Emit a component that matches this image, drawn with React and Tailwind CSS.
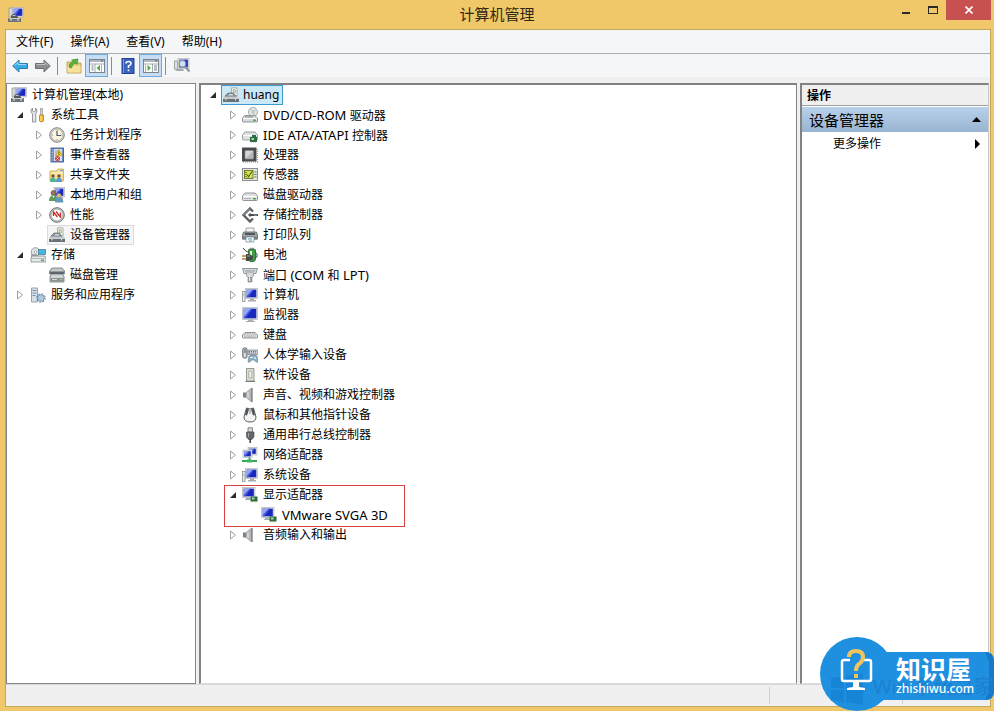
import React from "react";

const Svg = ({ children }) => (
  <svg width="16" height="16" viewBox="0 0 16 16" className="shrink-0" aria-hidden="true">
    {children}
  </svg>
);

// Screen with a lit diagonal, shared by all monitor icons
const Screen = ({ x, y, w, h }) => (
  <g>
    <rect x={x} y={y} width={w} height={h} fill="#dcdfe1" stroke="#a9aeb3" strokeWidth=".6" />
    <rect x={x + 1.2} y={y + 1.2} width={w - 2.4} height={h - 2.4} fill="#1a27bd" />
    <path d={`M${x + 1.2} ${y + 1.2}h${w / 2}L${x + 1.2} ${y + h - 2}z`} fill="#93a5f6" />
    <path d={`M${x + w / 2 + 1} ${y + 1.2}h1.4L${x + 3} ${y + h - 1.2}H${x + 1.2}V${y + h - 2}z`} fill="#4258e2" />
  </g>
);

const Green = ({ x, y }) => (
  <g>
    <rect x={x} y={y} width="7" height="5" fill="#2c6b40" />
    <rect x={x + 1.5} y={y + 1} width="2.5" height="2" fill="#a9d6b0" />
    <path d={`M${x + 1} ${y + 5.3}h5`} stroke="#c8a94a" strokeWidth=".8" strokeDasharray="1 1" />
  </g>
);

const icons = {
  manage: (
    <Svg>
      <path d="M1 1h4v9H1z" fill="#d4d6d8" stroke="#8b8f93" strokeWidth=".7" />
      <Screen x={4.5} y={0.5} w={11} h={9.5} />
      <path d="M3 10q0-3 3-3l2 1 2 2v1H3z" fill="#53595f" />
      <path d="M4 9q2-2 4 0z" fill="#cfd4d7" />
      <path d="M0 11h13v4H0z" fill="#6e747a" />
      <path d="M1 11h11v1H1z" fill="#c9cdd1" />
      <path d="M2 13h2M9 13h2" stroke="#e7edc8" />
    </Svg>
  ),
  tools: (
    <Svg>
      <path d="M2.500 1v3l1.500 1 1.500-1V1q2.500 2 1 4.500L5.800 7v8H2.500V7L1.300 5.500Q0 3 2.500 1z" fill="#e4e6e8" stroke="#7c8084" strokeWidth=".8" />
      <path d="M10.500 1.500h2v4l-.5 3h-1l-.5-3z" fill="#d9dcde" stroke="#888" strokeWidth=".7" />
      <path d="M9.500 8h4v6q-2 2-4 0z" fill="#f0b92b" stroke="#a8781a" strokeWidth=".7" />
      <path d="M11 9v5" stroke="#fbe59a" />
    </Svg>
  ),
  clock: (
    <Svg>
      <circle cx="8" cy="8" r="7.300" fill="#d0d1d3" stroke="#85898d" />
      <circle cx="8" cy="8" r="5.700" fill="#fbf4de" stroke="#b8ad95" strokeWidth=".6" />
      <path d="M8 4v4.500h4" fill="none" stroke="#3f5877" strokeWidth="1.200" />
      <path d="M8 3v1M8 12v1M3 8h1M12 8h1" stroke="#8a8264" strokeWidth=".8" />
    </Svg>
  ),
  event: (
    <Svg>
      <rect x="2" y="1" width="12.500" height="14" fill="#6c8fcf" stroke="#324b86" strokeWidth=".8" />
      <path d="M5 2h8v12H5z" fill="#d7e0f2" />
      <path d="M1 3h3M1 5.500h3M1 8h3M1 10.500h3M1 13h3" stroke="#a4a9b0" />
      <path d="M6 4h3M6 6h2M6 8h2" stroke="#7895c9" strokeWidth=".8" />
      <path d="M10 2.500l3.500 6h-7z" fill="#f7cd25" stroke="#b58b13" strokeWidth=".5" />
      <path d="M10 4.500v2M10 7v1" stroke="#3c3200" strokeWidth=".8" />
      <circle cx="8.500" cy="11.500" r="2.500" fill="#d93b34" />
      <path d="M7.500 10.500l2 2M9.500 10.500l-2 2" stroke="#fff" strokeWidth=".8" />
    </Svg>
  ),
  share: (
    <Svg>
      <path d="M1 4h7l1-2h5.500v12H1z" fill="#f5e09a" stroke="#c9a240" strokeWidth=".8" />
      <path d="M2 6h12" stroke="#fdf4cd" />
      <rect x="11" y="3" width="3" height="1" fill="#6aa0d6" />
      <circle cx="4" cy="9" r="1.700" fill="#795137" />
      <circle cx="10" cy="9" r="1.700" fill="#795137" />
      <path d="M1 15q0-4.500 3-4.500T7 15z" fill="#4cb591" />
      <path d="M7 15q0-4.500 3-4.500t3 4.500z" fill="#5b99cf" />
    </Svg>
  ),
  users: (
    <Svg>
      <Screen x={5} y={0.5} w={10.5} h={9.5} />
      <path d="M11 10h3v3h-3z" fill="#aeb2b5" />
      <circle cx="4.500" cy="6" r="2.500" fill="#9a7658" stroke="#5c4637" strokeWidth=".6" />
      <circle cx="10" cy="8.500" r="2.200" fill="#d8bd8e" stroke="#7c633f" strokeWidth=".5" />
      <path d="M0 14q0-5.500 4.500-5.500T8.500 14z" fill="#5d9a60" />
      <path d="M6 15.500q0-5 4-5t4.500 5z" fill="#6495bb" />
      <path d="M3.500 9l1 2 1-2" fill="#fff" />
    </Svg>
  ),
  perf: (
    <Svg>
      <circle cx="8" cy="8" r="7.300" fill="#c3c6c8" stroke="#6e7173" />
      <circle cx="8" cy="8" r="5.700" fill="#fff" stroke="#9c9fa2" strokeWidth=".6" />
      <path d="M4.500 9V5l4 5M7 4.500l4.500 5.500V5.500" fill="none" stroke="#cd2f2f" strokeWidth="1.400" />
    </Svg>
  ),
  device: (
    <Svg>
      <path d="M8.500.8h5.500V9H8.500z" fill="#f3f4ef" stroke="#9a9f98" strokeWidth=".8" />
      <path d="M10.200 2.800h2v3h-2z" fill="none" stroke="#82a777" strokeWidth=".8" />
      <path d="M2 9l3-3h5l3 3v1H2z" fill="#858c93" stroke="#5c6369" strokeWidth=".6" />
      <path d="M5 8.500l1.500-1.500h3l1 1.500z" fill="#d6dadd" />
      <path d="M1 9.500h14l1 2H0z" fill="#c3c8cc" />
      <path d="M0 11h16v4H0z" fill="#687078" />
      <path d="M0 11.500h16" stroke="#e0e4e7" strokeWidth=".8" />
      <path d="M3 11v2.500M12.500 11v2.500" stroke="#dfe8a4" />
    </Svg>
  ),
  storage: (
    <Svg>
      <circle cx="5.500" cy="5" r="4.300" fill="#dfe5e8" stroke="#81888d" strokeWidth=".8" />
      <circle cx="5.500" cy="5" r="1.300" fill="#fff" stroke="#888" strokeWidth=".6" />
      <rect x="8.500" y="2.500" width="7" height="5" fill="#46b6dd" stroke="#39758c" strokeWidth=".7" />
      <path d="M1 7h6v7H1z" fill="#a5abad" />
      <path d="M2 9h13l1 2v4H1v-4z" fill="#e6e9e9" stroke="#737a7c" strokeWidth=".7" />
      <path d="M1.500 11.500h14" stroke="#9ba2a4" strokeWidth=".7" />
      <rect x="11" y="12.500" width="3" height="1.500" fill="#55a650" />
    </Svg>
  ),
  disks: (
    <Svg>
      <path d="M3 1h10l2.500 3v3H.5V4z" fill="#c3c8c9" stroke="#5f6668" strokeWidth=".7" />
      <path d="M1 4.500h14v2.500H1z" fill="#62686a" />
      <path d="M3 7h10l2 2v6H1V9z" fill="#d2d5d6" stroke="#5f6668" strokeWidth=".7" />
      <path d="M1.500 11h13v3.500h-13z" fill="#8a9193" />
      <path d="M3 12.500h5" stroke="#d3d7d7" />
      <rect x="11" y="12" width="2" height="1" fill="#9ae372" />
    </Svg>
  ),
  services: (
    <Svg>
      <path d="M1.500 1h6v14h-6z" fill="#d9e0e5" stroke="#82919d" strokeWidth=".8" />
      <path d="M2.500 3.500h4M2.500 6h4M2.500 8.500h3" stroke="#7091ad" />
      <circle cx="11" cy="11" r="3.300" fill="#c9dcec" stroke="#6b90ae" strokeWidth="1" />
      <circle cx="11" cy="11" r="4.200" fill="none" stroke="#6b90ae" strokeWidth="1.200" strokeDasharray="1.600 1.700" />
      <circle cx="11" cy="11" r="1.300" fill="#fff" stroke="#6b90ae" strokeWidth=".7" />
    </Svg>
  ),
  dvd: (
    <Svg>
      <circle cx="11" cy="5" r="4.500" fill="#e6eaea" stroke="#91989b" strokeWidth=".8" />
      <path d="M11 4.500L8 1.500M11 4.500l3.500-2M11 5l2 3.500" stroke="#a5cbb6" />
      <circle cx="11" cy="5" r="1.200" fill="#fff" stroke="#888" strokeWidth=".6" />
      <path d="M2.500 8.500h10l3 2.500v3q0 1-1 1h-13q-1 0-1-1v-3z" fill="#d8dadb" stroke="#7c8183" strokeWidth=".8" />
      <path d="M1 11.500h14" stroke="#fff" />
      <path d="M3 10h8" stroke="#777" strokeWidth=".8" />
      <rect x="11" y="12.500" width="3" height="1.500" fill="#4ea845" />
    </Svg>
  ),
  ide: (
    <Svg>
      <path d="M3 5h10l2.500 3v4q0 1-1 1h-13q-1 0-1-1V8z" fill="#dfe1e2" stroke="#878c8f" strokeWidth=".8" />
      <path d="M1 8.500h14" stroke="#fff" />
      <Green x={8} y={10} />
      <path d="M10 10V8h4v2" fill="#2c6b40" />
    </Svg>
  ),
  cpu: (
    <Svg>
      <path d="M1 15.200h15" stroke="#b5975a" strokeDasharray="1 1" />
      <path d="M15.500 2v14" stroke="#b5975a" strokeDasharray="1 1" />
      <rect x="0" y="0.500" width="14.500" height="14" fill="#484a4c" />
      <rect x="3" y="3.500" width="8.500" height="8.500" rx="1" fill="#b4b8bb" stroke="#8e9295" strokeWidth=".6" />
      <path d="M3.500 11.500V4H11z" fill="#d5d8da" />
    </Svg>
  ),
  sensor: (
    <Svg>
      <rect x=".5" y="1.500" width="15" height="12" fill="#e4e6e3" stroke="#8b908c" />
      <rect x="2.500" y="3.500" width="8.500" height="8" fill="#d3e04e" stroke="#5a6320" strokeWidth=".8" />
      <path d="M3 5.500h2M3 7.500h2M3 9.500h2" stroke="#5c7e27" strokeWidth=".8" />
      <path d="M6 10.500l4-6M5 7.500l1.500 2" stroke="#344411" />
      <path d="M12.500 5h2M12.500 7.500h2M12.500 10h2" stroke="#3a8a51" />
    </Svg>
  ),
  drive: (
    <Svg>
      <path d="M3 6h10l2.500 3v3.500q0 1-1 1h-13q-1 0-1-1V9z" fill="#e0e2e2" stroke="#85898b" strokeWidth=".9" />
      <path d="M1 9.500h14" stroke="#fff" />
      <path d="M2 11.500h7" stroke="#b1b5b6" />
      <rect x="11" y="11" width="3" height="1.500" fill="#4ba93f" />
    </Svg>
  ),
  controller: (
    <Svg>
      <path d="M11 4.500L8 1.500 1.500 8 8 14.500l3-3" fill="none" stroke="#5c6062" strokeWidth="2.400" />
      <path d="M8 1.500L1.500 8" stroke="#9da1a3" strokeWidth="1" />
      <path d="M7 8h9" stroke="#494c4e" strokeWidth="2" />
      <path d="M8.500 5.500L6 8l2.500 2.500z" fill="#494c4e" />
      <path d="M12 8h3" stroke="#a7aaac" strokeWidth="1" />
    </Svg>
  ),
  printer: (
    <Svg>
      <path d="M4 1h8v5H4z" fill="#f3f4f5" stroke="#8f9395" strokeWidth=".8" />
      <path d="M1.500 5h13l1 3v4H.5V8z" fill="#a2a6a9" stroke="#5b5f62" strokeWidth=".8" />
      <path d="M3 6h10v2H3z" fill="#515558" />
      <path d="M.5 9.500h15v3H.5z" fill="#7b8084" />
      <path d="M4 10h8v5H4z" fill="#f2f8fa" stroke="#70777c" strokeWidth=".6" />
      <path d="M6 12h4M7 14h3" stroke="#4aa4bc" />
    </Svg>
  ),
  battery: (
    <Svg>
      <path d="M6.500 3l1-1h5l1 1v9q0 2-2 2.500H8l-1.500-2z" fill="#3d9c46" stroke="#235c29" strokeWidth=".8" />
      <path d="M8 .8h4V2H8z" fill="#8d928d" />
      <path d="M9 4v5" stroke="#e4f7d2" strokeWidth="2" />
      <path d="M1 1q3 4 5 4" fill="none" stroke="#405044" />
      <path d="M13 5q3 1 2 5l-2 1" fill="none" stroke="#30583a" />
      <path d="M4 7h3l4 2v3l-4 2H4z" fill="#464b47" />
      <path d="M5 9h3" stroke="#9a9f9b" />
      <path d="M0 9h4M0 12h4" stroke="#b28331" strokeWidth="1.300" />
    </Svg>
  ),
  port: (
    <Svg>
      <path d="M.5 1.500h15L14 6.500h-2.500v2l-1.500 2H6L4.500 8.500v-2H2z" fill="#d5d8da" stroke="#7c8286" strokeWidth=".8" />
      <path d="M3 3h10l-1 2.500H4z" fill="#9aa1a5" />
      <path d="M4.500 4h7" stroke="#fff" strokeDasharray="1 1" />
      <path d="M6 10.500h4V15H6z" fill="#a4a9ac" stroke="#777d80" strokeWidth=".6" />
      <path d="M7.500 8v6" stroke="#e6e8e9" />
    </Svg>
  ),
  computer: (
    <Svg>
      <Screen x={3.500} y={1.500} w={12} h={10} />
      <path d="M8 11.500h4v1.500h2v1.500H6V13h2z" fill="#a8adb0" />
      <rect x=".5" y="4.500" width="2.500" height="10" fill="#eceeed" stroke="#8d9395" strokeWidth=".8" />
      <path d="M1.200 8h1" stroke="#64b058" />
    </Svg>
  ),
  monitor: (
    <Svg>
      <Screen x={0.5} y={0.500} w={15} h={12} />
      <path d="M6 12.500h5v1.500h2V15H4v-1h2z" fill="#a9adb0" />
    </Svg>
  ),
  keyboard: (
    <Svg>
      <path d="M3 5.500h10L15.500 8v2q0 1-1 1h-13q-1 0-1-1V8z" fill="#e0e2e3" stroke="#74787a" strokeWidth=".8" />
      <path d="M3 6.800h10M2 8.200h12M2.500 9.600h11" stroke="#8d9194" strokeWidth=".7" strokeDasharray="1 .8" />
    </Svg>
  ),
  hid: (
    <Svg>
      <rect x=".8" y="1" width="4.200" height="10" rx="1.500" fill="#d5d8da" stroke="#565b5f" />
      <path d="M3 2v4" stroke="#4b5054" />
      <path d="M6 3h10v4.500H6z" fill="#c8ccd0" stroke="#7a8085" strokeWidth=".7" />
      <path d="M7 4.500h8M7 6h8" stroke="#6d7479" strokeDasharray="1 1" />
      <path d="M7 9q4-2 8 0l1 6h-2l-1.500-2h-3L8 15H6z" fill="#8fb3ca" stroke="#59717f" strokeWidth=".6" />
      <path d="M8.500 10.500h2M13 10v2" stroke="#fff" />
    </Svg>
  ),
  software: (
    <Svg>
      <path d="M4.500 1.500h7.500v12.500H4.500z" fill="#dde0da" stroke="#7d837b" strokeWidth=".8" />
      <path d="M6.800 4h3v7h-3z" fill="#f4f6f0" stroke="#8fa385" strokeWidth=".8" />
      <path d="M3.500 14.500H13" stroke="#777c75" />
    </Svg>
  ),
  sound: (
    <Svg>
      <path d="M1 5.500h3.500v5H1z" fill="#7d8285" />
      <path d="M4 5.500l5.500-4.500v14L4 10.500z" fill="#b4b8bb" stroke="#8b8f92" strokeWidth=".5" />
      <path d="M6 5v6" stroke="#e4e6e7" strokeWidth="1.200" />
      <path d="M10 1v14" stroke="#6c7073" strokeWidth="1.200" />
    </Svg>
  ),
  mouse: (
    <Svg>
      <path d="M4.500 1q3.500 2 7 0l2.500 9q0 5-6 5t-6-5z" fill="#f3f4f5" stroke="#46494c" strokeWidth=".9" />
      <path d="M4.500 1l2.500 1.500-2 6L3 8zM11.500 1L9 2.500l2 6 2-.5z" fill="#505356" />
      <path d="M8 3v4" stroke="#a4a8aa" strokeWidth="1.400" />
    </Svg>
  ),
  usb: (
    <Svg>
      <path d="M6 .8h4.500V5H6z" fill="#d9dbdc" stroke="#676a6d" strokeWidth=".8" />
      <path d="M4.500 5H12v5l-2 2.500H6.500l-2-2.500z" fill="#62666a" stroke="#46494c" strokeWidth=".6" />
      <path d="M6.500 6v4" stroke="#a6aaad" />
      <path d="M8.200 12v4" stroke="#46494b" strokeWidth="1.600" />
    </Svg>
  ),
  network: (
    <Svg>
      <Screen x={6} y={0.5} w={9} h={7.500} />
      <Screen x={1} y={3} w={9} h={7.500} />
      <path d="M0 14h15M7.500 10.500v3" stroke="#36a55a" strokeWidth="1.800" />
      <rect x="5" y="12.500" width="5" height="3" fill="#42b868" />
    </Svg>
  ),
  display: (
    <Svg>
      <Screen x={0.5} y={0.5} w={12.5} h={10} />
      <path d="M4 10.500h4V12h1v1H3v-1h1z" fill="#a8adb0" />
      <Green x={8.500} y={9.500} />
    </Svg>
  ),
  back: (
    <Svg>
      <path d="M.7 8L7 2v3.500h8.500v5H7V14z" fill="#39a9e6" stroke="#2b7fae" />
      <path d="M2.500 7.500L6 4.500v2h8" fill="none" stroke="#9edcf8" />
    </Svg>
  ),
  forward: (
    <Svg>
      <path d="M15.300 8L9 2v3.500H.5v5H9V14z" fill="#8b8f92" stroke="#6c7072" />
      <path d="M1.500 6.500H10v-2l3 3" fill="none" stroke="#bec1c3" />
    </Svg>
  ),
  up: (
    <Svg>
      <path d="M1 4h5l1 1h8v10H1z" fill="#ecd07c" stroke="#b39547" strokeWidth=".8" />
      <path d="M1.500 8h13v6.500h-13z" fill="#f7e09a" />
      <path d="M3 9q0-4 4-5.500L5.500 2 12 1l-1 5.500L9.500 5Q6 6 5.500 10z" fill="#58b53c" stroke="#37801f" strokeWidth=".6" />
    </Svg>
  ),
  treePane: (
    <Svg>
      <rect x=".5" y="1.500" width="15" height="13" fill="#fff" stroke="#7b848c" />
      <path d="M1 3h14" stroke="#aeb7bf" strokeWidth="2" />
      <path d="M12 3h2" stroke="#57616b" />
      <path d="M1 6h14M6 6v8" stroke="#8b949c" strokeWidth=".8" />
      <path d="M2.500 8h2M2.500 10h2M2.500 12h2" stroke="#6e7b88" />
      <path d="M11 7v6L7.500 10z" fill="#51ad3e" />
      <path d="M12.500 7v7" stroke="#a9b0b6" />
    </Svg>
  ),
  actionPane: (
    <Svg>
      <rect x=".5" y="1.500" width="15" height="13" fill="#fff" stroke="#7b848c" />
      <path d="M1 3h14" stroke="#aeb7bf" strokeWidth="2" />
      <path d="M12 3h2" stroke="#57616b" />
      <path d="M1 6h14M9.500 6v8" stroke="#8b949c" strokeWidth=".8" />
      <path d="M11 8h3M11 10h3M11 12h3" stroke="#6e7b88" />
      <path d="M4.500 7v6L8 10z" fill="#51ad3e" />
      <path d="M2.500 7v7" stroke="#a9b0b6" />
    </Svg>
  ),
  help: (
    <Svg>
      <rect x="2" y=".5" width="12" height="15" fill="#3a62bf" stroke="#24428c" />
      <path d="M3.500 1v14" stroke="#7997dc" />
      <path d="M6 5.500Q6 3.500 8.500 3.500T11 5.500Q11 7 8.500 8v2" fill="none" stroke="#fff" strokeWidth="1.600" />
      <path d="M8.500 11.500v1.700" stroke="#fff" strokeWidth="1.700" />
    </Svg>
  ),
  scan: (
    <Svg>
      <rect x=".5" y="3" width="3" height="8" fill="#dfe2e4" stroke="#8d9397" strokeWidth=".8" />
      <Screen x={4} y={0.5} w={11} h={10} />
      <path d="M3 11h6l1 2H1z" fill="#a4a9ac" />
      <circle cx="8.500" cy="5.800" r="3.300" fill="#cfe2f4" stroke="#7f8c98" strokeWidth="1.100" />
      <path d="M11 8.500l4.500 5" stroke="#8d959c" strokeWidth="2" />
    </Svg>
  ),
};

const leftTree = [
  { label: "计算机管理(本地)", icon: "manage", level: 0 },
  { label: "系统工具", icon: "tools", level: 1, state: "open" },
  { label: "任务计划程序", icon: "clock", level: 2, state: "closed" },
  { label: "事件查看器", icon: "event", level: 2, state: "closed" },
  { label: "共享文件夹", icon: "share", level: 2, state: "closed" },
  { label: "本地用户和组", icon: "users", level: 2, state: "closed" },
  { label: "性能", icon: "perf", level: 2, state: "closed" },
  { label: "设备管理器", icon: "device", level: 2, selected: true },
  { label: "存储", icon: "storage", level: 1, state: "open" },
  { label: "磁盘管理", icon: "disks", level: 2 },
  { label: "服务和应用程序", icon: "services", level: 1, state: "closed" },
];

const devices = [
  { label: "DVD/CD-ROM 驱动器", icon: "dvd" },
  { label: "IDE ATA/ATAPI 控制器", icon: "ide" },
  { label: "处理器", icon: "cpu" },
  { label: "传感器", icon: "sensor" },
  { label: "磁盘驱动器", icon: "drive" },
  { label: "存储控制器", icon: "controller" },
  { label: "打印队列", icon: "printer" },
  { label: "电池", icon: "battery" },
  { label: "端口 (COM 和 LPT)", icon: "port" },
  { label: "计算机", icon: "computer" },
  { label: "监视器", icon: "monitor" },
  { label: "键盘", icon: "keyboard" },
  { label: "人体学输入设备", icon: "hid" },
  { label: "软件设备", icon: "software" },
  { label: "声音、视频和游戏控制器", icon: "sound" },
  { label: "鼠标和其他指针设备", icon: "mouse" },
  { label: "通用串行总线控制器", icon: "usb" },
  { label: "网络适配器", icon: "network" },
  { label: "系统设备", icon: "computer" },
];

const menus = ["文件(F)", "操作(A)", "查看(V)", "帮助(H)"];

// Latin runs are set one size up from the Chinese text around them
const Mixed = ({ text }) => (
  <span className="whitespace-pre">
    {text.split(/([ -~]+)/).map((part, i) =>
      i % 2 ? (
        <span key={i} className="text-[13px]">
          {part}
        </span>
      ) : (
        part
      )
    )}
  </span>
);

const Arrow = ({ state }) => (
  <svg width="8" height="10" viewBox="0 0 8 10" className="shrink-0" aria-hidden="true">
    {state === "open" && <path d="M7 2v6H1z" fill="#2b2b2b" />}
    {state === "closed" && <path d="M1.500 1v8L6.500 5z" fill="#fff" stroke="#a0a0a0" />}
  </svg>
);

const indents = ["pl-0.5", "pl-[9px]", "pl-7"];

const LeftItem = ({ item }) => (
  <li className={`flex h-5 items-center gap-1 ${indents[item.level]}`}>
    {item.level > 0 && <Arrow state={item.state} />}
    <button
      className={`flex h-5 items-center gap-[5px] border pr-[3px] pl-px ${
        item.selected ? "border-[#dadada] bg-[#f5f5f5]" : "border-transparent"
      }`}
    >
      {icons[item.icon]}
      <span>{item.label}</span>
    </button>
  </li>
);

const DeviceItem = ({ item, state = "closed" }) => (
  <li className="flex h-5 items-center pl-7">
    <Arrow state={state} />
    <button className="flex h-5 items-center gap-[5px] pl-[5px]">
      {icons[item.icon]}
      <Mixed text={item.label} />
    </button>
  </li>
);

const TitleBar = () => (
  <header className="flex h-[29px] items-start">
    <div className="flex h-[29px] w-32 items-center pl-2">{icons.manage}</div>
    <h1 className="flex-1 text-center text-[15px] leading-[29px] text-[#2f2713]">计算机管理</h1>
    <div className="flex w-32 justify-end pr-[3px]">
      <button aria-label="最小化" className="flex h-5 w-[27px] items-center justify-center">
        <span className="mt-1.5 h-0.5 w-2 bg-[#2a2a2a]" />
      </button>
      <button aria-label="最大化" className="flex h-5 w-[27px] items-center justify-center">
        <span className="h-2 w-2.5 border border-t-2 border-[#2a2a2a]" />
      </button>
      <button aria-label="关闭" className="flex h-5 w-[45px] items-center justify-center bg-[#c75050]">
        <svg width="8" height="8" viewBox="0 0 8 8">
          <path d="M.5 .5l7 7M7.500 .5l-7 7" stroke="#fff" strokeWidth="1.600" />
        </svg>
      </button>
    </div>
  </header>
);

const ToolButton = ({ icon, label, active }) => (
  <button
    aria-label={label}
    className={`flex h-[23px] w-[23px] items-center justify-center border ${
      active ? "border-[#6fa8dc] bg-[#c5ddf5]" : "border-transparent"
    }`}
  >
    {icons[icon]}
  </button>
);

const Divider = () => <span className="mr-1 ml-[3px] h-[18px] w-px bg-[#8c8c8c]" />;

const Watermark = () => (
  <aside className="absolute right-0 bottom-0 h-[74px] w-[175px]">
    <svg width="175" height="74" viewBox="0 0 175 74" className="absolute inset-0" aria-hidden="true">
      <path d="M60 15h106q9 0 9 9v30q0 9-9 9H60z" fill="#1f90e0" />
      <path d="M166 15q9 0 9 9v30q0 9-9 9l4-9V24z" fill="#1879c6" />
      <circle cx="38" cy="37" r="37" fill="#1f90e0" />
      <path d="M12 41l13-2v12H12zM27 39l17-3v15H27zM12 53h13v12l-13-2zM27 53h17v15l-17-3z" fill="#1785d6" />
      <path d="M31 23h-6q-2 0-2 2v17q0 2 2 2h25q2 0 2-2V25q0-2-2-2h-5" fill="none" stroke="#fff" strokeWidth="2.500" />
      <path d="M34 45h6v5l6 1v2H28v-2l6-1z" fill="#fff" />
      <path d="M30 20q0-6 7-6t7 6q0 4-4 7-3 2-3 7" fill="none" stroke="#efc45d" strokeWidth="4" />
      <rect x="35" y="37" width="4" height="4" fill="#efc45d" />
    </svg>
    <div className="absolute inset-x-0 top-9 flex justify-between pl-[54px] text-[20px] leading-7 text-[#1b80cf]">
      <span>Win</span>
      <span>系统之家</span>
    </div>
    <p className="absolute top-[18px] left-[77px] text-[25px] leading-7 font-bold whitespace-nowrap text-white">知识屋</p>
    <p className="absolute top-11 left-[77px] text-[12px] leading-4 font-medium whitespace-nowrap text-white">zhishiwu.com</p>
  </aside>
);

const App = () => {
  return (
    <div className="relative flex min-h-screen flex-col bg-[#f0c869] px-[5px] pb-1 font-['Noto_Sans','Noto_Sans_CJK_SC',sans-serif] text-[12px] leading-5 text-black">
      <div className="-mx-[5px]">
        <TitleBar />
      </div>

      <div className="mr-[-2px] flex flex-1 flex-col border border-[#c3a75c] bg-[#f0f0f0]">
        <nav className="flex h-6 items-center gap-[17px] border-b border-[#a9adb2] bg-[#f5f6f7] pl-2.5">
          {menus.map((menu) => (
            <button key={menu}>{menu}</button>
          ))}
        </nav>

        <div className="flex h-[23px] items-center bg-[#f5f6f7] pl-0.5">
          <ToolButton icon="back" label="后退" />
          <ToolButton icon="forward" label="前进" />
          <Divider />
          <ToolButton icon="up" label="向上" />
          <ToolButton icon="treePane" label="显示控制台树" active />
          <Divider />
          <ToolButton icon="help" label="帮助" />
          <ToolButton icon="actionPane" label="显示操作窗格" active />
          <Divider />
          <ToolButton icon="scan" label="扫描检测硬件改动" />
        </div>

        <main className="mt-1.5 flex flex-1 gap-[3px]">
          <ul className="w-[190px] shrink-0 border border-[#828790] bg-white pt-px">
            {leftTree.map((item) => (
              <LeftItem key={item.label} item={item} />
            ))}
          </ul>

          <section className="flex-1 border-t-2 border-r border-b border-l-2 border-[#828282] border-r-[#828282] border-b-[#dcdcdc] bg-white">
            <div className="flex h-5 items-center pl-2">
              <Arrow state="open" />
              <button className="ml-1 flex h-5 items-center gap-1 border border-[#3c9bd0] bg-[#cbe8f6] pr-0.5 pl-px">
                {icons.device}
                <span className="pr-px">huang</span>
              </button>
            </div>
            <ul>
              {devices.map((item) => (
                <DeviceItem key={item.label} item={item} />
              ))}
            </ul>
            <div className="-mb-0.5 ml-[23px] w-[181px] pb-0.5 outline -outline-offset-1 outline-[#d9413f]">
              <ul className="-ml-[23px]">
                <DeviceItem item={{ label: "显示适配器", icon: "display" }} state="open" />
                <li className="flex h-5 items-center gap-[5px] pl-[60px]">
                  {icons.display}
                  <Mixed text="VMware SVGA 3D" />
                </li>
              </ul>
            </div>
            <ul>
              <DeviceItem item={{ label: "音频输入和输出", icon: "sound" }} />
            </ul>
          </section>

          <section className="mr-px w-[189px] shrink-0 border-t-2 border-r border-b border-l-2 border-[#828282] border-r-[#c8c8c8] border-b-[#dcdcdc] bg-white">
            <h2 className="h-[21px] border-b border-[#a0a0a0] bg-[#f0f0f0] pl-[5px] leading-[22px] font-bold">操作</h2>
            <button className="mt-px flex h-[25px] w-full items-center justify-between bg-linear-to-b from-[#b9d1ea] to-[#99b4d1] pr-[7px] pl-[7px] text-[15px]">
              设备管理器
              <svg width="9" height="5" viewBox="0 0 9 5">
                <path d="M0 5l4.500-5L9 5z" />
              </svg>
            </button>
            <button className="flex h-6 w-full items-center justify-between pr-2 pl-[31px]">
              更多操作
              <svg width="5" height="10" viewBox="0 0 5 10">
                <path d="M0 0l5 5-5 5z" />
              </svg>
            </button>
          </section>
        </main>

        <footer className="flex h-[22px] justify-end border-t border-[#d7d7d7]">
          <span className="my-0.5 w-[133px] border-l border-[#d0d0d0]" />
          <span className="my-0.5 w-[88px] border-l border-[#d0d0d0]" />
        </footer>
      </div>

      <Watermark />
    </div>
  );
};

export default App;
